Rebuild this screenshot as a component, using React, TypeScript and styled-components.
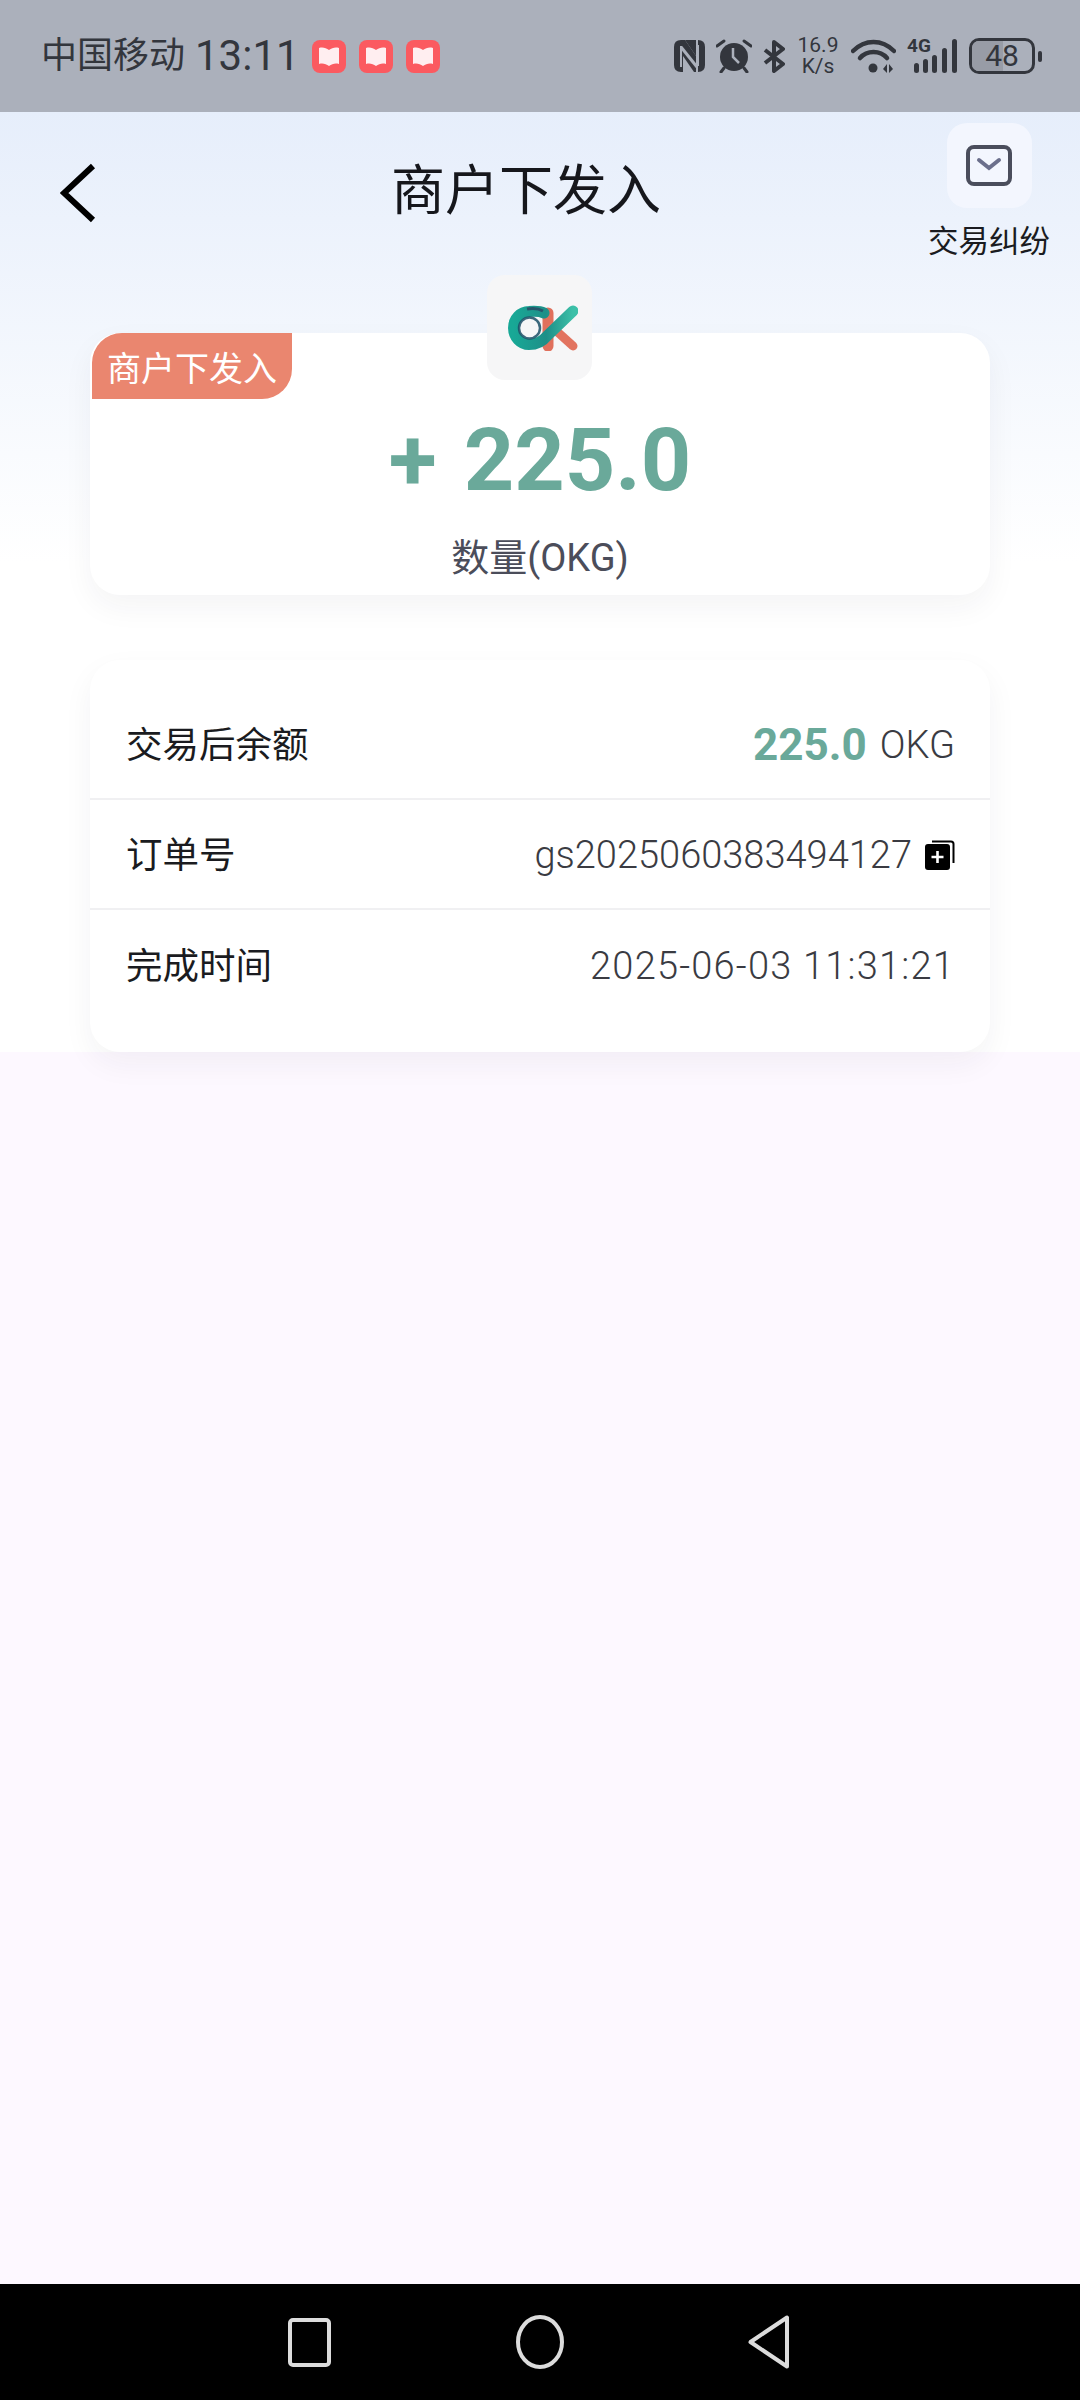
import styled, { createGlobalStyle } from 'styled-components'

const GlobalStyle = createGlobalStyle`
  html, body {
    margin: 0;
    padding: 0;
    background: #fdf8ff;
  }
  * {
    box-sizing: border-box;
  }
  body {
    font-family: Roboto, "Noto Sans CJK SC", sans-serif;
  }
`

const rows = [
  { label: '订单号', value: 'gs2025060383494127', copy: true, spacing: 0 },
  { label: '完成时间', value: '2025-06-03 11:31:21', copy: false, spacing: 1.2 },
]

function BookIcon() {
  return (
    <svg width="34" height="33" viewBox="0 0 34 33">
      <rect width="34" height="33" rx="8" fill="#fb5a60" />
      <path d="M7 8 C11 7 14 8 17 10 C20 8 23 7 27 8 V24 C23 23 20 24 17 26 C14 24 11 23 7 24 Z" fill="#ffeef0" />
    </svg>
  )
}

function NetworkIcons() {
  return (
    <>
      <svg width="31" height="32" viewBox="0 0 31 32">
        <path d="M7 0 H11 L22 16 V32 H20 L9 16 V32 H7 Q0 32 0 25 V7 Q0 0 7 0 Z" fill="#33363d" />
        <path d="M24 32 H24 Q31 32 31 25 V7 Q31 0 24 0 H20 H11 L22 16 V0 H24 Z" fill="#33363d" />
        <path d="M7 7 L23 27" stroke="#abb0bb" strokeWidth="3" />
        <path d="M7 6 V27 M24 5 V26" stroke="#abb0bb" strokeWidth="2" />
      </svg>
      <svg width="36" height="34" viewBox="0 0 36 34">
        <circle cx="18" cy="18" r="14" fill="#33363d" />
        <path d="M17 9 V18 L23 24" fill="none" stroke="#abb0bb" strokeWidth="2.5" />
        <path d="M1 7 L8 2 M35 7 L28 2 M8 29 L5 33 M28 29 L31 33" stroke="#33363d" strokeWidth="3" strokeLinecap="round" />
      </svg>
      <svg width="22" height="33" viewBox="0 0 22 33">
        <path d="M2 10 L20 24 L11 31 V2 L20 9 L2 23" fill="none" stroke="#33363d" strokeWidth="4" strokeLinejoin="round" />
      </svg>
    </>
  )
}

function WifiIcon() {
  return (
    <svg width="45" height="34" viewBox="0 0 45 34">
      <path d="M2 12 C14 0 31 0 43 12" fill="none" stroke="#33363d" strokeWidth="4.5" strokeLinecap="round" />
      <path d="M9 19 C16 11 29 11 36 19" fill="none" stroke="#33363d" strokeWidth="4.5" strokeLinecap="round" />
      <circle cx="22" cy="29" r="4.5" fill="#33363d" />
      <path d="M32 30 L36 25 V34 Z M38 25 L42 30 L38 34 Z" fill="#33363d" />
    </svg>
  )
}

function SignalIcon() {
  return (
    <svg width="44" height="34" viewBox="0 0 44 34">
      <rect x="0" y="24" width="5" height="10" rx="2.5" fill="#33363d" />
      <rect x="9" y="20" width="5" height="14" rx="2.5" fill="#33363d" />
      <rect x="18" y="16" width="5" height="18" rx="2.5" fill="#33363d" />
      <rect x="28" y="9" width="5" height="25" rx="2.5" fill="#33363d" />
      <rect x="38" y="0" width="5" height="34" rx="2.5" fill="#33363d" />
    </svg>
  )
}

function OkLogo() {
  return (
    <svg width="70" height="46" viewBox="0 0 70 46">
      <defs>
        <linearGradient id="tealStroke" x1="0" y1="0" x2="1" y2="0">
          <stop offset="0" stopColor="#18a896" />
          <stop offset="0.55" stopColor="#1e8f88" />
          <stop offset="1" stopColor="#3cc0a8" />
        </linearGradient>
      </defs>
      <path d="M40 8 V41" stroke="#e0705c" strokeWidth="11" strokeLinecap="round" />
      <path d="M44 22 L65 41" stroke="#e2735f" strokeWidth="9" strokeLinecap="round" />
      <path d="M36 8 C32 6 27 6 21 6.5 A15.5 16.5 0 0 0 21 39.5 C30 39.5 35 36 39 31 L65 6" fill="none" stroke="url(#tealStroke)" strokeWidth="11" strokeLinecap="round" />
      <path d="M35 6 C30 3 24 3 19 4" fill="none" stroke="#27566b" strokeWidth="3" />
      <circle cx="21.5" cy="23" r="10.5" fill="none" stroke="#1b4f66" strokeWidth="2.5" opacity="0.85" />
    </svg>
  )
}

function App() {
  return (
    <Screen>
      <GlobalStyle />
      <StatusBar>
        <StatusLeft>
          <Carrier>中国移动</Carrier>
          <Clock>13:11</Clock>
          <Notifications>
            <BookIcon />
            <BookIcon />
            <BookIcon />
          </Notifications>
        </StatusLeft>
        <StatusRight>
          <NetworkIcons />
          <Speed>
            <span>16.9</span>
            <span>K/s</span>
          </Speed>
          <WifiIcon />
          <Cellular>
            <CellularLabel>4G</CellularLabel>
            <SignalIcon />
          </Cellular>
          <Battery>
            <BatteryFill />
            <BatteryLevel>48</BatteryLevel>
          </Battery>
          <BatteryNub />
        </StatusRight>
      </StatusBar>

      <Content>
        <Header>
          <BackButton>
            <svg width="36" height="60" viewBox="0 0 36 60">
              <path d="M33 3 L4 30 L33 57" fill="none" stroke="#000" strokeWidth="6" />
            </svg>
          </BackButton>
          <Title>商户下发入</Title>
          <Dispute>
            <DisputeIcon>
              <svg width="46" height="41" viewBox="0 0 46 41">
                <rect x="2" y="2" width="42" height="37" rx="6" fill="none" stroke="#4a4d5c" strokeWidth="4" />
                <path d="M13 15 L23 23 L33 15" fill="none" stroke="#6b6f8c" strokeWidth="4" strokeLinecap="round" />
              </svg>
            </DisputeIcon>
            <DisputeLabel>交易纠纷</DisputeLabel>
          </Dispute>
        </Header>

        <AmountCard>
          <TypeBadge>商户下发入</TypeBadge>
          <LogoBox>
            <OkLogo />
          </LogoBox>
          <Amount>+ 225.0</Amount>
          <AmountUnit>数量(OKG)</AmountUnit>
        </AmountCard>

        <DetailCard>
          <DetailRow>
            <DetailLabel>交易后余额</DetailLabel>
            <DetailValue>
              <Balance>225.0</Balance>
              <BalanceUnit>OKG</BalanceUnit>
            </DetailValue>
          </DetailRow>
          {rows.map((row) => (
            <DetailRow key={row.label}>
              <DetailLabel>{row.label}</DetailLabel>
              <DetailValue $spacing={row.spacing}>
                {row.value}
                {row.copy && (
                  <svg width="30" height="30" viewBox="0 0 30 30">
                    <path d="M7 1.5 H26 Q28.5 1.5 28.5 4 V23" fill="none" stroke="#000" strokeWidth="2" />
                    <rect x="0" y="4" width="25" height="26" rx="3" fill="#000" />
                    <path d="M12.5 11 V23 M6.5 17 H18.5" stroke="#fff" strokeWidth="2.6" />
                  </svg>
                )}
              </DetailValue>
            </DetailRow>
          ))}
        </DetailCard>
      </Content>

      <NavBar>
        <svg width="43" height="49" viewBox="0 0 43 49">
          <rect x="2" y="2" width="39" height="45" rx="3" fill="none" stroke="#dcdcdc" strokeWidth="4" />
        </svg>
        <svg width="48" height="54" viewBox="0 0 48 54">
          <ellipse cx="24" cy="27" rx="22" ry="25" fill="none" stroke="#dcdcdc" strokeWidth="4" />
        </svg>
        <svg width="42" height="54" viewBox="0 0 42 54">
          <path d="M39 2.5 V51.5 L2.5 27 Z" fill="none" stroke="#dcdcdc" strokeWidth="4" strokeLinejoin="round" />
        </svg>
      </NavBar>
    </Screen>
  )
}

export default App

const Screen = styled.div`
  width: 1080px;
  height: 2400px;
  display: flex;
  flex-direction: column;
  overflow: hidden;
`

const StatusBar = styled.div`
  height: 112px;
  flex: none;
  padding: 0 38px 0 41px;
  display: flex;
  align-items: center;
  justify-content: space-between;
  background: #abb0bb;
  color: #33363d;
`

const StatusLeft = styled.div`
  display: flex;
  align-items: center;
`

const Carrier = styled.span`
  font-size: 36px;
  line-height: 44px;
`

const Clock = styled.span`
  margin-left: 10px;
  font-size: 42px;
  line-height: 50px;
`

const Notifications = styled.div`
  margin-left: 12px;
  display: flex;
  gap: 13px;
`

const StatusRight = styled.div`
  display: flex;
  align-items: center;
  gap: 11px;
`

const Speed = styled.div`
  width: 44px;
  display: flex;
  flex-direction: column;
  align-items: center;
  font-size: 21px;
  line-height: 21px;
`

const Cellular = styled.div`
  position: relative;
  width: 51px;
  display: flex;
  justify-content: flex-end;
`

const CellularLabel = styled.span`
  position: absolute;
  left: 0;
  top: -3px;
  font-size: 19px;
  line-height: 20px;
  font-weight: 700;
`

const Battery = styled.div`
  position: relative;
  width: 66px;
  height: 36px;
  border: 3px solid #33363d;
  border-radius: 10px;
  overflow: hidden;
  display: flex;
  align-items: center;
  justify-content: center;
`

const BatteryFill = styled.div`
  position: absolute;
  left: 0;
  top: 0;
  bottom: 0;
  width: 31px;
  background: #989ca6;
`

const BatteryLevel = styled.span`
  position: relative;
  font-size: 30px;
  line-height: 30px;
`

const BatteryNub = styled.div`
  width: 4px;
  height: 11px;
  margin-left: -8px;
  border-radius: 2px;
  background: #33363d;
`

const Content = styled.main`
  flex: 1;
  padding: 0 90px;
  background-color: #fdf8ff;
  background-image: linear-gradient(180deg, #e6eefb 0, #ffffff 450px, #ffffff 940px);
  background-size: 100% 940px;
  background-repeat: no-repeat;
`

const Header = styled.header`
  height: 221px;
  margin: 0 -90px;
  padding: 11px 30px 0 60px;
  display: flex;
  align-items: flex-start;
`

const BackButton = styled.div`
  width: 36px;
  height: 60px;
  margin-top: 40px;
  flex: none;
`

const Title = styled.h1`
  flex: 1;
  margin: 37px 0 0;
  padding-left: 28px;
  text-align: center;
  font-size: 54px;
  line-height: 64px;
  font-weight: 400;
  color: #16171c;
`

const Dispute = styled.div`
  flex: none;
  display: flex;
  flex-direction: column;
  align-items: center;
  gap: 17px;
`

const DisputeIcon = styled.div`
  width: 85px;
  height: 85px;
  border-radius: 20px;
  background: #f3f6fe;
  display: flex;
  align-items: center;
  justify-content: center;
`

const DisputeLabel = styled.span`
  font-size: 30.5px;
  line-height: 34px;
  color: #1a1b20;
`

const AmountCard = styled.section`
  position: relative;
  height: 262px;
  padding-top: 77px;
  display: flex;
  flex-direction: column;
  align-items: center;
  background: #fff;
  border-radius: 30px;
  box-shadow: 0 12px 30px rgba(40, 40, 60, 0.05);
`

const TypeBadge = styled.div`
  position: absolute;
  left: 2px;
  top: 0;
  width: 200px;
  height: 66px;
  display: flex;
  align-items: center;
  justify-content: center;
  background: #ea866f;
  border-radius: 30px 0 30px 0;
  font-size: 34px;
  color: #fff;
`

const LogoBox = styled.div`
  position: absolute;
  left: 397px;
  top: -58px;
  width: 105px;
  height: 105px;
  padding-left: 6px;
  display: flex;
  align-items: center;
  justify-content: center;
  background: #f6f6f7;
  border-radius: 18px;
`

const Amount = styled.div`
  font-size: 88px;
  line-height: 100px;
  font-weight: 700;
  word-spacing: 5px;
  color: #6aa99a;
`

const AmountUnit = styled.div`
  margin-top: 23px;
  font-size: 38px;
  line-height: 50px;
  color: #4b4d5a;
`

const DetailCard = styled.section`
  margin-top: 65px;
  height: 392px;
  padding: 30px 0 32px;
  background: #fff;
  border-radius: 30px;
  box-shadow: 0 12px 30px rgba(40, 40, 60, 0.05);
`

const DetailRow = styled.div`
  height: 110px;
  padding: 0 35px 0 36px;
  display: flex;
  align-items: center;
  justify-content: space-between;
  border-bottom: 2px solid #f0f0f2;

  &:last-child {
    border-bottom: none;
  }
`

const DetailLabel = styled.span`
  margin-top: -3px;
  font-size: 36.5px;
  color: #1a1b20;
`

const DetailValue = styled.div<{ $spacing?: number }>`
  display: flex;
  align-items: center;
  gap: 13px;
  margin-top: 2px;
  font-size: 38px;
  font-weight: 300;
  letter-spacing: ${(p) => p.$spacing ?? 0}px;
  color: #3a3b42;
`

const Balance = styled.span`
  font-size: 44px;
  font-weight: 700;
  color: #6aa99a;
`

const BalanceUnit = styled.span`
  font-size: 38px;
`

const NavBar = styled.nav`
  height: 116px;
  flex: none;
  padding: 0 290px 0 288px;
  display: flex;
  align-items: center;
  justify-content: space-between;
  background: #000;
`
